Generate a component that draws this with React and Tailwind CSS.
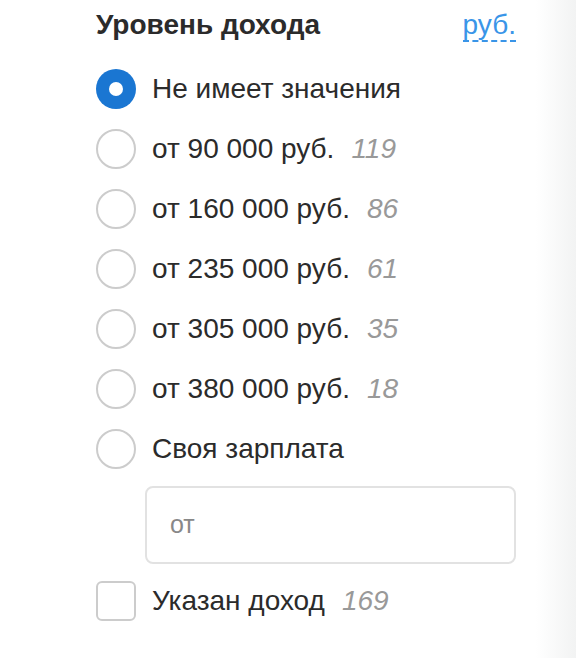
const options = [
  { label: "Не имеет значения", checked: true },
  { label: "от 90 000 руб.", count: 119 },
  { label: "от 160 000 руб.", count: 86 },
  { label: "от 235 000 руб.", count: 61 },
  { label: "от 305 000 руб.", count: 35 },
  { label: "от 380 000 руб.", count: 18 },
  { label: "Своя зарплата" },
];

function Radio({ checked }) {
  if (checked) {
    return (
      <span className="w-10 h-10 rounded-full bg-[#1a76d2] flex items-center justify-center shrink-0">
        <span className="w-[14px] h-[14px] rounded-full bg-white" />
      </span>
    );
  }
  return (
    <span className="w-10 h-10 rounded-full border-2 border-[#cccccc] bg-white shrink-0" />
  );
}

export default function App() {
  return (
    <div className="relative w-[578px] h-[658px] bg-white overflow-hidden font-['Liberation_Sans',Arial,sans-serif] text-[#2b2b2b]">
      {/* faint shadow at the right edge */}
      <div className="absolute top-0 right-[2px] w-[40px] h-full bg-gradient-to-r from-white to-[#f2f3f3]" />

      <div className="relative w-[420px] ml-[96px]">
        <div className="flex justify-between items-start pt-[9px] h-[59px]">
          <h2 className="text-[28px] leading-[32px] font-bold">Уровень дохода</h2>
          <span className="text-[28px] leading-[31px] text-[#3a95e8] border-b-2 border-dashed border-[#3a95e8]">
            руб.
          </span>
        </div>

        <ul>
          {options.map((o) => (
            <li key={o.label} className="flex items-center h-[60px]">
              <Radio checked={o.checked} />
              <span className="ml-4 text-[28px] leading-[32px]">{o.label}</span>
              {o.count && (
                <span className="ml-[17px] text-[28px] leading-[32px] italic text-[#999999]">
                  {o.count}
                </span>
              )}
            </li>
          ))}
        </ul>

        <div className="ml-[49px] mt-[7px] mb-[7px] w-[371px] h-[78px] border-2 border-[#e2e2e2] rounded-lg flex items-center px-[23px]">
          <span className="text-[25px] text-[#888888]">от</span>
        </div>

        <div className="flex items-center h-[60px]">
          <span className="w-10 h-10 rounded-md border-2 border-[#cccccc] bg-white shrink-0" />
          <span className="ml-4 text-[28px] leading-[32px]">Указан доход</span>
          <span className="ml-[17px] text-[28px] leading-[32px] italic text-[#999999]">169</span>
        </div>
      </div>
    </div>
  );
}
